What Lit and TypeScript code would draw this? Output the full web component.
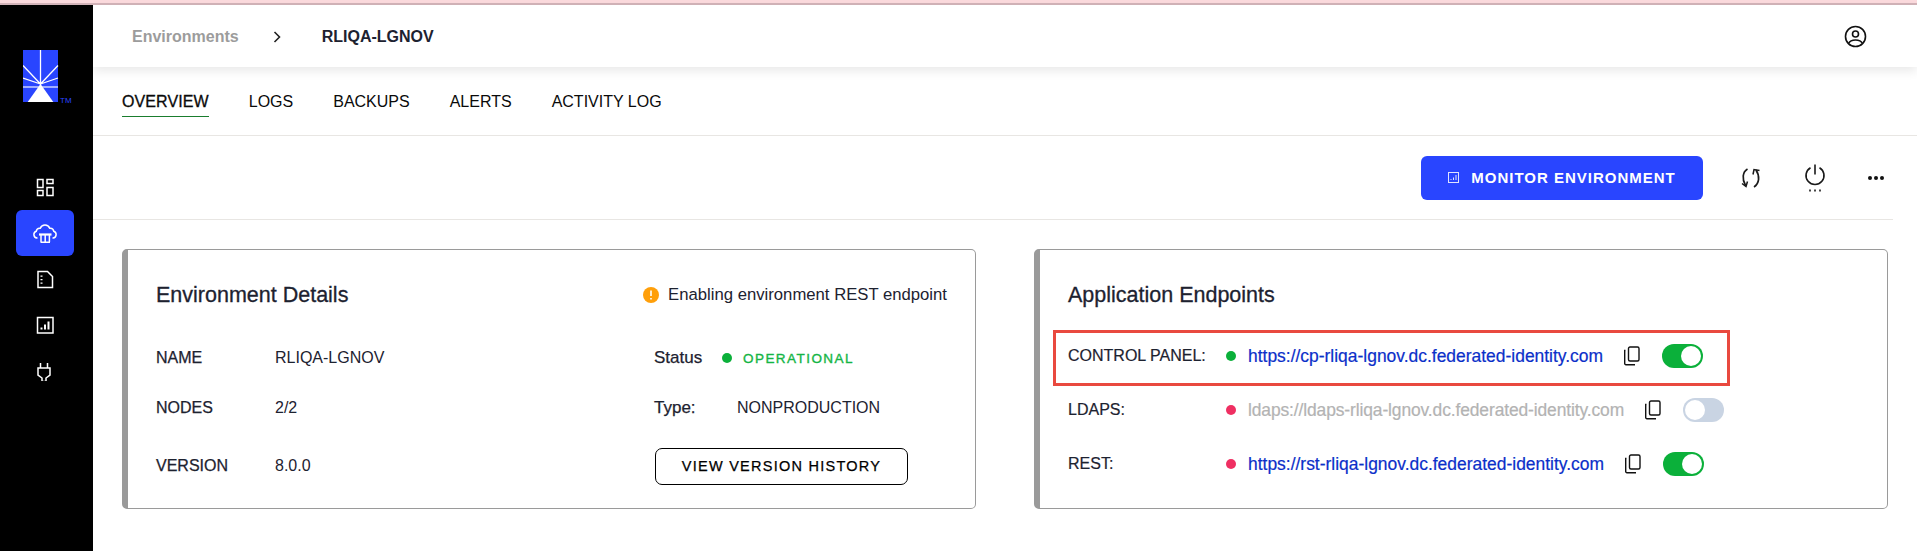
import { LitElement, html, css, svg } from "lit";
import { customElement } from "lit/decorators.js";

const ENDPOINTS = [
  { label: "CONTROL PANEL:", url: "https://cp-rliqa-lgnov.dc.federated-identity.com", up: true, on: true, marked: true },
  { label: "LDAPS:", url: "ldaps://ldaps-rliqa-lgnov.dc.federated-identity.com", up: false, on: false, marked: false },
  { label: "REST:", url: "https://rst-rliqa-lgnov.dc.federated-identity.com", up: false, on: true, marked: false },
];

const NAV_ICONS = [
  svg`<rect x="1.5" y="1.5" width="5.5" height="8"/><rect x="11" y="1.5" width="6" height="4"/><rect x="1.5" y="12.5" width="5.5" height="5"/><rect x="11" y="9.500" width="6" height="8"/>`,
  svg`<path d="M4.500 15H4A3.500 3.500 0 0 1 3.300 8.200 3.600 3.600 0 0 1 7.300 5.200 5 5 0 0 1 12 2a5 5 0 0 1 4.700 3.200 3.600 3.600 0 0 1 4 3A3.500 3.500 0 0 1 20 15h-.5"/><path d="M6 11.500H18.500" stroke-width="2.200"/><path d="M8 11.500V19M12.200 11.500V19M16.400 11.500V19M7.500 19.200H17"/>`,
  svg`<path d="M2 1.500h9.500l5 5V17.500H2z"/><path d="M5.500 5.500v1.200M5.500 9v1.200M5.500 12.500v1.200" stroke-width="2"/>`,
  svg`<rect x="1.500" y="1.500" width="15.500" height="15.500"/><path d="M5.500 11.500v2M9 8.500v5M12.500 5.500v8" stroke-width="2"/>`,
  svg`<path d="M4.500 1v5M11.500 1v5M2 6h12v7l-4 3v3.500H6V16l-4-3z"/>`,
];

@customElement("app-root")
export class AppRoot extends LitElement {
  static styles = css`
    :host {
      display: block;
      height: 551px;
      overflow: hidden;
      background: #fff;
      font-family: "Liberation Sans", Arial, sans-serif;
      color: #1d2230;
      --blue: #2945ff;
      --green: #0bb03a;
      --pink: #ef2f62;
    }

    .alert-strip {
      height: 3px;
      background: #fbdadd;
      border-bottom: 2px solid #d3b4b9;
    }

    .shell {
      display: flex;
      height: 546px;
    }

    /* sidebar */
    .sidebar {
      width: 93px;
      flex: none;
      background: #000;
      display: flex;
      flex-direction: column;
      padding-top: 45px;
      box-sizing: border-box;
    }

    .logo {
      display: block;
      margin-left: 23px;
      width: 50px;
      height: 53px;
    }

    .nav {
      margin: 61px 19px 0 16px;
      display: flex;
      flex-direction: column;
    }

    .nav-item {
      height: 46px;
      border-radius: 6px;
      display: flex;
      align-items: center;
      justify-content: center;
    }

    .nav-item.active {
      background: var(--blue);
    }

    .nav-item svg {
      fill: none;
      stroke: #fff;
      stroke-width: 1.5;
    }

    /* main column */
    .main {
      flex: 1;
      min-width: 0;
    }

    .header {
      position: relative;
      height: 62px;
      display: flex;
      align-items: center;
      padding: 0 50px 0 39px;
      font-size: 16px;
      box-shadow: 0 4px 10px rgba(0, 0, 0, 0.09);
    }

    .crumbs {
      display: flex;
      align-items: center;
      padding-top: 2px;
    }

    .crumb {
      font-weight: 700;
      color: #9c9c9c;
    }

    .chevron {
      margin: 0 41px 0 34px;
    }

    .crumb-current {
      font-weight: 700;
      color: #1d2230;
    }

    .account {
      margin-left: auto;
    }

    .tabs {
      height: 68px;
      margin-top: 1px;
      border-bottom: 1px solid #e8e6e3;
      display: flex;
      gap: 40px;
      padding: 21px 0 0 29px;
      box-sizing: border-box;
      font-size: 16px;
      color: #0a0a0a;
    }

    .tab {
      height: 27px;
      line-height: 25px;
    }

    .tab.active {
      border-bottom: 1px solid #1a7d2e;
      letter-spacing: 0.1px;
      -webkit-text-stroke: 0.3px #0a0a0a;
    }

    .toolbar {
      height: 84px;
      margin-right: 24px;
      border-bottom: 1px solid #e8e6e3;
      box-sizing: border-box;
      display: flex;
      align-items: center;
      justify-content: flex-end;
      padding-right: 5px;
    }

    .monitor {
      width: 282px;
      height: 44px;
      border-radius: 6px;
      background: var(--blue);
      color: #fff;
      font-size: 15px;
      font-weight: 700;
      letter-spacing: 1px;
      display: flex;
      align-items: center;
      justify-content: center;
      gap: 12px;
    }

    .tool {
      width: 24px;
      height: 36px;
      display: flex;
      align-items: center;
      justify-content: center;
    }

    .tool.refresh {
      margin-left: 36px;
    }

    .tool.power {
      margin-left: 40px;
    }

    .tool.more {
      margin-left: 37px;
    }

    /* cards */
    .cards {
      display: flex;
      gap: 58px;
      padding: 29px 29px 0 29px;
    }

    .card {
      flex: 1;
      height: 260px;
      box-sizing: border-box;
      border: 1px solid #9a9a9a;
      border-left: 6px solid #9a9a9a;
      border-radius: 5px;
      padding: 32px 28px 0 28px;
    }

    .card-head {
      display: flex;
      align-items: center;
      justify-content: space-between;
      height: 26px;
    }

    .card-title {
      font-size: 21.500px;
      color: #1d2230;
      -webkit-text-stroke: 0.3px #1d2230;
    }

    .notice {
      display: flex;
      align-items: center;
      gap: 9px;
      font-size: 16.700px;
    }

    .details {
      display: grid;
      grid-template-columns: 498px 1fr;
      grid-template-rows: 50px 50px 66px;
      align-items: center;
      margin-top: 25px;
      font-size: 16px;
    }

    .pair {
      display: flex;
      align-items: center;
    }

    .pair .key {
      width: 119px;
      -webkit-text-stroke: 0.25px #1d2230;
    }

    .pair.side .key {
      width: 83px;
      font-size: 17px;
    }

    .pair.status .key {
      width: 68px;
      font-size: 17px;
    }

    .operational {
      color: #14b545;
      font-size: 13.500px;
      letter-spacing: 1.450px;
      margin-left: 11px;
      -webkit-text-stroke: 0.35px #14b545;
    }

    .dot {
      width: 10px;
      height: 10px;
      flex: none;
      border-radius: 50%;
      background: var(--green);
    }

    .dot.down {
      background: var(--pink);
    }

    .history {
      width: 253px;
      height: 37px;
      margin-left: 1px;
      box-sizing: border-box;
      border: 1px solid #000;
      border-radius: 7px;
      display: flex;
      align-items: center;
      justify-content: center;
      font-size: 14.500px;
      letter-spacing: 1.250px;
      color: #000;
      -webkit-text-stroke: 0.25px #000;
    }

    .endpoints {
      margin-top: 21px;
    }

    .endpoint {
      position: relative;
      display: flex;
      align-items: center;
      height: 54px;
      font-size: 16px;
    }

    .endpoint.marked::after {
      content: "";
      position: absolute;
      top: 1px;
      bottom: -3px;
      left: -15px;
      width: 677px;
      box-sizing: border-box;
      border: 3px solid #e9493f;
    }

    .endpoint .key {
      width: 158px;
      flex: none;
      -webkit-text-stroke: 0.2px #1d2230;
    }

    .url {
      margin-left: 12px;
      font-size: 17.450px;
      color: #0b2fc9;
      -webkit-text-stroke: 0.2px #0b2fc9;
    }

    .url.off {
      color: #b3b3b3;
      letter-spacing: -0.120px;
      -webkit-text-stroke: 0.2px #b3b3b3;
    }

    .copy {
      margin-left: 20px;
      flex: none;
    }

    .toggle {
      margin-left: 22px;
      width: 41px;
      height: 24px;
      flex: none;
      border-radius: 12px;
      background: var(--green);
      display: flex;
      justify-content: flex-end;
      align-items: center;
      padding: 0 2px;
      box-sizing: border-box;
    }

    .toggle.off {
      background: #c9d4e3;
      justify-content: flex-start;
    }

    .knob {
      width: 20px;
      height: 20px;
      border-radius: 50%;
      background: #fff;
    }
  `;

  private logo() {
    return html`<svg class="logo" viewBox="0 0 50 53">
      <rect x="0" y="0" width="35" height="52" fill="#2945ff" />
      <g stroke="#fff" stroke-width="1.300">
        <path d="M17.500 0V36M0 15.500L17.500 34M35 15.500L17.500 34M0 28L17.500 34M35 28L17.500 34" />
        <path d="M0 37H35" stroke="#c8d0ff" />
      </g>
      <path d="M17.500 34L4.700 52H30.300z" fill="#fff" />
      <text x="37" y="52.500" font-size="8" fill="#2945ff" font-family="Liberation Sans">TM</text>
    </svg>`;
  }

  private copyIcon() {
    return html`<svg class="copy" width="17" height="20" viewBox="0 0 17 20" fill="none" stroke="#111" stroke-width="1.400">
      <rect x="5.500" y="1" width="10.500" height="14" rx="1.500" />
      <path d="M2.500 4.500H1.700V17.500a1.200 1.200 0 0 0 1.200 1.200H12" />
    </svg>`;
  }

  render() {
    return html`
      <div class="alert-strip"></div>
      <div class="shell">
        <aside class="sidebar">
          ${this.logo()}
          <nav class="nav">
            ${NAV_ICONS.map(
              (icon, i) => html`<div class="nav-item ${i === 1 ? "active" : ""}">
                <svg width="${i === 1 ? 24 : 18}" height="${i === 1 ? 21 : 19}" viewBox="0 0 ${i === 1 ? 24 : 18} ${i === 1 ? 21 : 19}">${icon}</svg>
              </div>`
            )}
          </nav>
        </aside>

        <div class="main">
          <header class="header">
            <div class="crumbs">
              <span class="crumb">Environments</span>
              <svg class="chevron" width="8" height="12" viewBox="0 0 8 12" fill="none" stroke="#222" stroke-width="1.600"><path d="M1.500 1L6.500 6L1.500 11" /></svg>
              <span class="crumb-current">RLIQA-LGNOV</span>
            </div>
            <svg class="account" width="23" height="23" viewBox="0 0 23 23" fill="none" stroke="#111" stroke-width="1.600">
              <circle cx="11.500" cy="11.500" r="10" />
              <circle cx="11.500" cy="9" r="3" />
              <path d="M4.500 18.500C6 15.500 9 15 11.500 15S17 15.500 18.500 18.500" />
            </svg>
          </header>

          <div class="tabs">
            <span class="tab active">OVERVIEW</span>
            <span class="tab">LOGS</span>
            <span class="tab">BACKUPS</span>
            <span class="tab">ALERTS</span>
            <span class="tab">ACTIVITY LOG</span>
          </div>

          <div class="toolbar">
            <div class="monitor">
              <svg width="11" height="11" viewBox="0 0 11 11" fill="none" stroke="#dfe3ff" stroke-width="1"><rect x="0.500" y="0.500" width="10" height="10" /><path d="M3 8V7M5.500 8V5.500M8 8V3" /></svg>
              <span>MONITOR ENVIRONMENT</span>
            </div>
            <div class="tool refresh">
              <svg width="20" height="20" viewBox="0 0 20 20" fill="none" stroke="#1a1a1a" stroke-width="1.700">
                <path d="M6.500 1C1.500 4 0.800 11 4.500 17.500" />
                <path d="M1 15.500L5 18.500L6.500 13.500" stroke-width="1.500" />
                <path d="M13 19C18.500 15.500 19 8 15 2" />
                <path d="M18.500 2.500L13 1.500L12 6.500" stroke-width="1.500" />
              </svg>
            </div>
            <div class="tool power">
              <svg width="24" height="32" viewBox="0 0 24 32" fill="none" stroke="#1a1a1a" stroke-width="1.600">
                <path d="M12 2.500V12.500M7.500 5.700A9 9 0 1 0 16.500 5.700" />
                <path d="M6.200 28.500H7.800M11.200 28.500H12.800M16.200 28.500H17.800" stroke-width="1.800" />
              </svg>
            </div>
            <div class="tool more">
              <svg width="18" height="4" viewBox="0 0 18 4" fill="#111"><circle cx="3" cy="2" r="2" /><circle cx="9" cy="2" r="2" /><circle cx="15" cy="2" r="2" /></svg>
            </div>
          </div>

          <div class="cards">
            <section class="card">
              <div class="card-head">
                <span class="card-title">Environment Details</span>
                <span class="notice">
                  <svg width="16" height="16" viewBox="0 0 16 16"><circle cx="8" cy="8" r="8" fill="#ff9f0a" /><path d="M8 3.500V9M8 11V12.500" stroke="#fff" stroke-width="1.600" /></svg>
                  Enabling environment REST endpoint
                </span>
              </div>
              <div class="details">
                <div class="pair"><span class="key">NAME</span><span>RLIQA-LGNOV</span></div>
                <div class="pair status"><span class="key">Status</span><span class="dot"></span><span class="operational">OPERATIONAL</span></div>
                <div class="pair"><span class="key">NODES</span><span>2/2</span></div>
                <div class="pair side"><span class="key">Type:</span><span>NONPRODUCTION</span></div>
                <div class="pair"><span class="key">VERSION</span><span>8.0.0</span></div>
                <div class="history">VIEW VERSION HISTORY</div>
              </div>
            </section>

            <section class="card">
              <div class="card-head"><span class="card-title">Application Endpoints</span></div>
              <div class="endpoints">
                ${ENDPOINTS.map(
                  (e) => html`<div class="endpoint ${e.marked ? "marked" : ""}">
                    <span class="key">${e.label}</span>
                    <span class="dot ${e.up ? "" : "down"}"></span>
                    <span class="url ${e.on ? "" : "off"}">${e.url}</span>
                    ${this.copyIcon()}
                    <span class="toggle ${e.on ? "" : "off"}"><span class="knob"></span></span>
                  </div>`
                )}
              </div>
            </section>
          </div>
        </div>
      </div>
    `;
  }
}

declare global {
  interface HTMLElementTagNameMap {
    "app-root": AppRoot;
  }
}
